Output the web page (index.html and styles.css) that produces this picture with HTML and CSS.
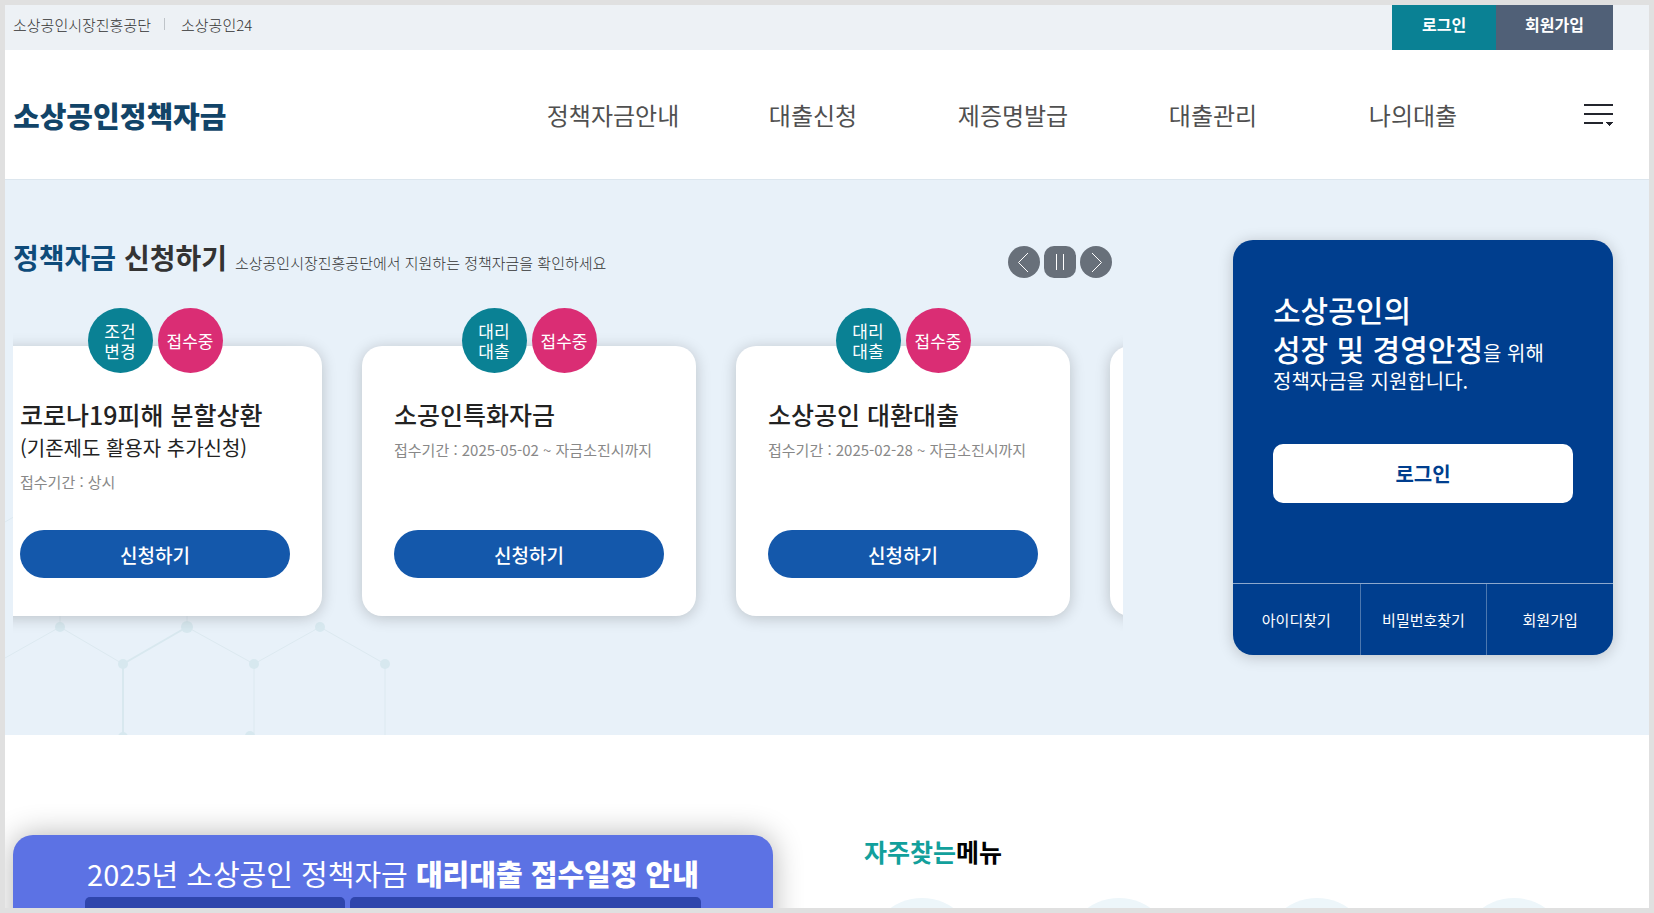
FILE: index.html
```
<!DOCTYPE html>
<html lang="ko">
<head>
    <meta charset="UTF-8">
    <title>소상공인정책자금</title>
    <link rel="stylesheet" href="styles.css">
</head>
<body>
    <div class="topbar">
        <div class="inner topbar-inner">
            <ul class="site-links">
                <li><a href="#">소상공인시장진흥공단</a></li>
                <li><a href="#">소상공인24</a></li>
            </ul>
            <div class="member-links">
                <a href="#" class="member-login">로그인</a>
                <a href="#" class="member-join">회원가입</a>
            </div>
        </div>
    </div>

    <header class="header">
        <div class="inner header-inner">
            <h1 class="logo"><a href="#">소상공인정책자금</a></h1>
            <nav class="gnb">
                <a href="#">정책자금안내</a>
                <a href="#">대출신청</a>
                <a href="#">제증명발급</a>
                <a href="#">대출관리</a>
                <a href="#">나의대출</a>
            </nav>
            <button type="button" class="menu-btn" aria-label="전체메뉴">
                <svg width="29" height="22" viewBox="0 0 29 22" shape-rendering="crispEdges">
                    <path d="M0 0h29v2H0zM0 9h29v2H0zM0 18h19v2H0z" fill="#23252d"/>
                    <path d="M22 18h7v1h-1v1h-1v1h-1v1h-1v-1h-1v-1h-1v-1h-1z" fill="#23252d"/>
                </svg>
            </button>
        </div>
    </header>

    <section class="hero">
        <svg class="hero-pattern" width="420" height="260" viewBox="0 0 420 260" fill="none" aria-hidden="true">
            <g stroke="#dce9f0" stroke-width="1">
                <path d="M0 47l55-32M55 152l63 37M0 183l55-31M182 152l67 37M249 189l66-37M315 152l65 37"/>
                <path d="M55 152V15M182 152V15M249 189v71M380 189v71"/>
            </g>
            <path d="M118 260v-71l64-37" stroke="#d8e8ef" stroke-width="2"/>
            <g fill="#d7e8ef">
                <circle cx="55" cy="152" r="5"/>
                <circle cx="182" cy="152" r="6"/>
                <circle cx="315" cy="152" r="5"/>
                <circle cx="118" cy="189" r="5"/>
                <circle cx="249" cy="189" r="5"/>
                <circle cx="380" cy="189" r="5"/>
                <circle cx="118" cy="262" r="5"/>
                <circle cx="245" cy="261" r="5"/>
            </g>
        </svg>

        <div class="inner hero-inner">
            <div class="fund">
                <div class="fund-head">
                    <h2><span>정책자금</span> 신청하기</h2>
                    <p>소상공인시장진흥공단에서 지원하는 정책자금을 확인하세요</p>
                    <div class="fund-control">
                        <button type="button" aria-label="이전">
                            <svg width="32" height="32" viewBox="0 0 32 32"><path d="M20 7l-9.500 9.500L20 26" fill="none" stroke="#fff"/></svg>
                        </button>
                        <button type="button" class="pause" aria-label="정지">
                            <svg width="32" height="32" viewBox="0 0 32 32"><path d="M12.500 8v16M19.500 8v16" fill="none" stroke="#fff"/></svg>
                        </button>
                        <button type="button" aria-label="다음">
                            <svg width="32" height="32" viewBox="0 0 32 32"><path d="M12 7l9.500 9.500L12 26" fill="none" stroke="#fff"/></svg>
                        </button>
                    </div>
                </div>

                <div class="fund-view">
                    <ul class="fund-list">
                        <li class="card">
                            <div class="badges">
                                <span class="badge">조건<br>변경</span>
                                <span class="badge badge-open">접수중</span>
                            </div>
                            <h3>코로나19피해 분할상환</h3>
                            <p class="card-sub">(기존제도 활용자 추가신청)</p>
                            <p class="card-date">접수기간 : 상시</p>
                            <button type="button" class="apply-btn">신청하기</button>
                        </li>
                        <li class="card">
                            <div class="badges">
                                <span class="badge">대리<br>대출</span>
                                <span class="badge badge-open">접수중</span>
                            </div>
                            <h3>소공인특화자금</h3>
                            <p class="card-date">접수기간 : 2025-05-02 ~ 자금소진시까지</p>
                            <button type="button" class="apply-btn">신청하기</button>
                        </li>
                        <li class="card">
                            <div class="badges">
                                <span class="badge">대리<br>대출</span>
                                <span class="badge badge-open">접수중</span>
                            </div>
                            <h3>소상공인 대환대출</h3>
                            <p class="card-date">접수기간 : 2025-02-28 ~ 자금소진시까지</p>
                            <button type="button" class="apply-btn">신청하기</button>
                        </li>
                        <li class="card"></li>
                    </ul>
                </div>
            </div>

            <aside class="login-box">
                <div class="login-body">
                    <p class="login-text">소상공인의<br>성장 및 경영안정<span>을 위해</span></p>
                    <p class="login-desc">정책자금을 지원합니다.</p>
                    <button type="button" class="login-btn">로그인</button>
                </div>
                <div class="login-links">
                    <a href="#">아이디찾기</a>
                    <a href="#">비밀번호찾기</a>
                    <a href="#">회원가입</a>
                </div>
            </aside>
        </div>
    </section>

    <section class="inner bottom">
        <div class="notice">
            <p class="notice-title">2025년 소상공인 정책자금 <strong>대리대출 접수일정 안내</strong></p>
            <div class="notice-cols">
                <div></div>
                <div></div>
            </div>
        </div>
        <div class="quick">
            <h2><span>자주찾는</span>메뉴</h2>
            <ul class="quick-list">
                <li></li>
                <li></li>
                <li></li>
                <li></li>
            </ul>
        </div>
    </section>
</body>
</html>
```
FILE: styles.css
```
* {
    box-sizing: border-box;
}
html {
    overflow: hidden;
}
body {
    height: 100vh;
    margin: 0;
    border: 5px solid #e0e0e0;
    overflow: hidden;
    background-color: #fff;
    color: #333;
    font-family: "Noto Sans CJK KR", sans-serif;
    font-size: 15px;
}
h1, h2, h3, p, ul {
    margin: 0;
    padding: 0;
}
ul {
    list-style: none;
}
a {
    color: inherit;
    text-decoration: none;
}
button {
    padding: 0;
    border: none;
    font-family: inherit;
    cursor: pointer;
}
svg {
    display: block;
}
.inner {
    padding: 0 36px 0 8px;
}

/* top bar */
.topbar {
    background-color: #edf1f5;
}
.topbar-inner {
    display: flex;
    justify-content: space-between;
}
.site-links {
    display: flex;
    align-items: center;
    height: 38px;
    font-weight: 300;
    color: #333;
}
.site-links li + li {
    display: flex;
    align-items: center;
}
.site-links li + li::before {
    content: "";
    width: 1px;
    height: 12px;
    margin: 0 16px 0 13px;
    background-color: #bfc4c9;
}
.member-links {
    display: flex;
    height: 45px;
    line-height: 38px;
    color: #fff;
    font-size: 16px;
    font-weight: 700;
}
.member-links a {
    padding: 0 29px;
}
.member-links .member-login {
    padding: 0 30px;
    background-color: #0a8194;
}
.member-join {
    background-color: #506077;
}

/* header */
.header {
    border-bottom: 1px solid #dce6ee;
}
.header-inner {
    display: flex;
    align-items: center;
    height: 129px;
}
.logo {
    margin-right: auto;
    color: #124468;
    font-size: 29px;
    font-weight: 900;
    line-height: 40px;
}
.gnb {
    display: grid;
    grid-template-columns: repeat(5, 200px);
    margin-right: 71px;
    color: #505050;
    font-size: 24px;
    font-weight: 400;
    line-height: 40px;
    text-align: center;
}
.menu-btn {
    background: none;
}

/* hero */
.hero {
    position: relative;
    padding: 60px 0 80px;
    background-color: #e8f1f9;
}
.hero-pattern {
    position: absolute;
    left: 0;
    bottom: 0;
    height: 260px;
}
.hero-inner {
    position: relative;
    display: flex;
    gap: 110px;
}
.fund {
    flex: 1;
    min-width: 0;
}
.fund-head {
    display: flex;
    align-items: baseline;
    height: 44px;
    padding-right: 11px;
}
.fund-head h2 {
    font-size: 28px;
    font-weight: 700;
    line-height: 34px;
}
.fund-head h2 span {
    color: #0e4b7a;
}
.fund-head p {
    margin-left: 8px;
    color: #333;
    font-weight: 300;
}
.fund-control {
    display: flex;
    align-self: center;
    gap: 4px;
    margin-left: auto;
}
.fund-control button {
    border-radius: 50%;
    background-color: #68707a;
}
.fund-control .pause {
    border-radius: 10px;
}
.fund-view {
    overflow: hidden;
}
.fund-list {
    display: flex;
    gap: 40px;
    margin-left: -25px;
    padding: 62px 0 39px;
}
.card {
    position: relative;
    display: flex;
    flex: 0 0 334px;
    flex-direction: column;
    min-height: 270px;
    padding: 50px 32px 38px;
    border-radius: 20px;
    background-color: #fff;
    box-shadow: 0 2px 15px rgba(0, 0, 0, 0.2);
}
.badges {
    position: absolute;
    top: -38px;
    left: 0;
    right: 0;
    display: flex;
    justify-content: center;
    gap: 5px;
}
.badge {
    display: flex;
    align-items: center;
    justify-content: center;
    width: 65px;
    height: 65px;
    border-radius: 50%;
    background-color: #0a8194;
    color: #fff;
    font-size: 17px;
    line-height: 20px;
}
.badge-open {
    background-color: #da2d74;
}
.card h3 {
    color: #222;
    font-size: 25px;
    font-weight: 500;
    line-height: 36px;
}
.card-sub {
    color: #222;
    font-size: 20px;
    line-height: 32px;
}
.card-date {
    color: #888;
    line-height: 36px;
    white-space: nowrap;
}
.apply-btn {
    height: 48px;
    margin-top: auto;
    border-radius: 24px;
    background-color: #1458ab;
    color: #fff;
    font-size: 19px;
    font-weight: 500;
}

/* login box */
.login-box {
    display: flex;
    flex: 0 0 380px;
    flex-direction: column;
    min-height: 415px;
    border-radius: 20px;
    background-color: #003e8e;
    box-shadow: 0 2px 15px rgba(0, 0, 0, 0.2);
    color: #fff;
}
.login-body {
    padding: 50px 40px 0;
}
.login-text {
    font-size: 30px;
    font-weight: 500;
    line-height: 39px;
}
.login-text span {
    font-size: 20px;
    font-weight: 400;
    line-height: 20px;
}
.login-desc {
    font-size: 20px;
    line-height: 26px;
}
.login-btn {
    width: 100%;
    height: 59px;
    margin-top: 50px;
    border-radius: 10px;
    background-color: #fff;
    color: #003e8e;
    font-size: 20px;
    font-weight: 700;
}
.login-links {
    display: grid;
    grid-template-columns: repeat(3, 1fr);
    margin-top: auto;
    border-top: 1px solid #8ca8cd;
    line-height: 71px;
    text-align: center;
}
.login-links a + a {
    border-left: 1px solid #4d78af;
}

/* notice, quick menu */
.bottom {
    display: grid;
    grid-template-columns: 760fr 790fr;
    gap: 50px;
    padding-top: 100px;
}
.notice {
    min-height: 300px;
    padding: 18px 72px 0;
    border-radius: 20px;
    background-color: #5c72e4;
    box-shadow: 0 0 30px rgba(0, 0, 0, 0.3);
}
.notice-title {
    margin-bottom: 4px;
    color: #fff;
    font-size: 29px;
    font-weight: 400;
    line-height: 40px;
    text-align: center;
    white-space: nowrap;
}
.notice-title strong {
    font-weight: 900;
}
.notice-cols {
    display: grid;
    grid-template-columns: 260fr 351fr;
    gap: 5px;
}
.notice-cols div {
    height: 60px;
    border-radius: 5px;
    background-color: #2f45ac;
}
.quick h2 {
    padding-left: 41px;
    color: #000;
    font-size: 25px;
    font-weight: 700;
    line-height: 32px;
}
.quick h2 span {
    color: #12a09c;
}
.quick-list {
    display: grid;
    grid-template-columns: repeat(4, 1fr);
    justify-items: center;
    padding-top: 31px;
}
.quick-list li {
    width: 108px;
    height: 108px;
    border-radius: 50%;
    background-color: #edf6fa;
}
```
